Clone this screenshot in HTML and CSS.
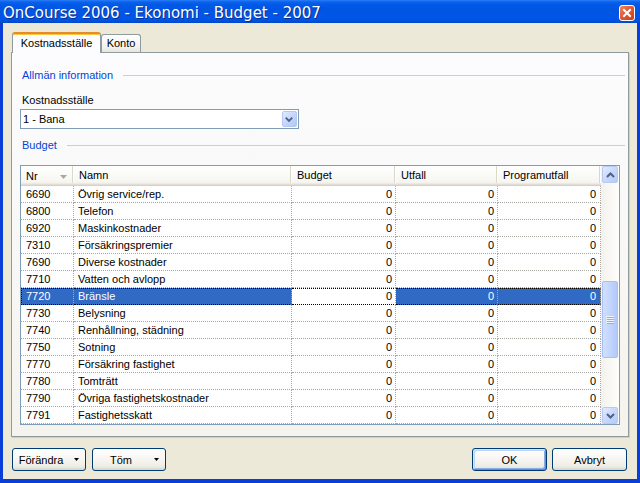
FILE: index.html
```html
<!DOCTYPE html>
<html>
<head>
<meta charset="utf-8">
<title>OnCourse 2006 - Ekonomi - Budget - 2007</title>
<link rel="stylesheet" href="styles.css">
</head>
<body>
<div class="window">
  <div class="titlebar">
    <span class="title">OnCourse 2006 - Ekonomi - Budget - 2007</span>
    <span class="close">
      <svg width="16" height="16" viewBox="0 0 16 16">
        <defs>
          <linearGradient id="cg" x1="0" y1="0" x2="1" y2="1">
            <stop offset="0" stop-color="#F08A66"/>
            <stop offset="0.5" stop-color="#E1552F"/>
            <stop offset="1" stop-color="#C83E1B"/>
          </linearGradient>
        </defs>
        <rect x="0.5" y="0.5" width="15" height="15" rx="2.5" fill="url(#cg)" stroke="#FFFFFF"/>
        <path d="M5 5L11 11M11 5L5 11" stroke="#FFFFFF" stroke-width="2" stroke-linecap="square"/>
      </svg>
    </span>
  </div>
  <div class="client">
    <div class="tabs">
      <div class="tab active">Kostnadsställe</div>
      <div class="tab konto">Konto</div>
    </div>
    <div class="panel">
      <div class="section"><span>Allmän information</span></div>
      <div class="label">Kostnadsställe</div>
      <div class="combo">
        <span>1 - Bana</span>
        <span class="combo-btn">
          <svg width="15" height="16" viewBox="0 0 15 16"><path d="M4 6.5L7.5 10L11 6.5" fill="none" stroke="#4D6185" stroke-width="2"/></svg>
        </span>
      </div>
      <div class="section budget"><span>Budget</span></div>
      <div class="grid">
        <div class="gmain">
          <div class="ghead">
            <div class="hcell nr"><span>Nr</span><svg width="7" height="4" viewBox="0 0 7 4"><path d="M0 0H7L3.5 4Z" fill="#ACA899"/></svg></div>
            <div class="hcell">Namn</div>
            <div class="hcell">Budget</div>
            <div class="hcell">Utfall</div>
            <div class="hcell">Programutfall</div>
          </div>
          <div class="grow"><div class="cell">6690</div><div class="cell">Övrig service/rep.</div><div class="cell num">0</div><div class="cell num">0</div><div class="cell num last">0</div></div>
          <div class="grow"><div class="cell">6800</div><div class="cell">Telefon</div><div class="cell num">0</div><div class="cell num">0</div><div class="cell num last">0</div></div>
          <div class="grow"><div class="cell">6920</div><div class="cell">Maskinkostnader</div><div class="cell num">0</div><div class="cell num">0</div><div class="cell num last">0</div></div>
          <div class="grow"><div class="cell">7310</div><div class="cell">Försäkringspremier</div><div class="cell num">0</div><div class="cell num">0</div><div class="cell num last">0</div></div>
          <div class="grow"><div class="cell">7690</div><div class="cell">Diverse kostnader</div><div class="cell num">0</div><div class="cell num">0</div><div class="cell num last">0</div></div>
          <div class="grow"><div class="cell">7710</div><div class="cell">Vatten och avlopp</div><div class="cell num">0</div><div class="cell num">0</div><div class="cell num last">0</div></div>
          <div class="grow sel"><div class="cell">7720</div><div class="cell">Bränsle</div><div class="cell num focus">0</div><div class="cell num">0</div><div class="cell num last">0</div></div>
          <div class="grow"><div class="cell">7730</div><div class="cell">Belysning</div><div class="cell num">0</div><div class="cell num">0</div><div class="cell num last">0</div></div>
          <div class="grow"><div class="cell">7740</div><div class="cell">Renhållning, städning</div><div class="cell num">0</div><div class="cell num">0</div><div class="cell num last">0</div></div>
          <div class="grow"><div class="cell">7750</div><div class="cell">Sotning</div><div class="cell num">0</div><div class="cell num">0</div><div class="cell num last">0</div></div>
          <div class="grow"><div class="cell">7770</div><div class="cell">Försäkring fastighet</div><div class="cell num">0</div><div class="cell num">0</div><div class="cell num last">0</div></div>
          <div class="grow"><div class="cell">7780</div><div class="cell">Tomträtt</div><div class="cell num">0</div><div class="cell num">0</div><div class="cell num last">0</div></div>
          <div class="grow"><div class="cell">7790</div><div class="cell">Övriga fastighetskostnader</div><div class="cell num">0</div><div class="cell num">0</div><div class="cell num last">0</div></div>
          <div class="grow"><div class="cell">7791</div><div class="cell">Fastighetsskatt</div><div class="cell num">0</div><div class="cell num">0</div><div class="cell num last">0</div></div>
        </div>
        <div class="vscroll">
          <div class="sbtn">
            <svg width="9" height="6" viewBox="0 0 9 6"><path d="M1 5L4.5 1.5L8 5" fill="none" stroke="#4D6185" stroke-width="2"/></svg>
          </div>
          <div class="strack">
            <div class="thumb">
              <svg width="8" height="8" viewBox="0 0 8 8">
                <path d="M0 0.5H8M0 2.5H8M0 4.5H8M0 6.5H8" stroke="#EEF4FE" stroke-width="1"/>
                <path d="M1 1.5H8M1 3.5H8M1 5.5H8M1 7.5H8" stroke="#8CB0F8" stroke-width="1"/>
              </svg>
            </div>
          </div>
          <div class="sbtn">
            <svg width="9" height="6" viewBox="0 0 9 6"><path d="M1 1L4.5 4.5L8 1" fill="none" stroke="#4D6185" stroke-width="2"/></svg>
          </div>
        </div>
      </div>
    </div>
    <div class="buttons">
      <div class="btn dd"><span class="lbl">Förändra</span><svg width="5" height="3" viewBox="0 0 5 3"><path d="M0 0H5L2.5 3Z" fill="#000"/></svg></div>
      <div class="btn dd second"><span class="lbl">Töm</span><svg width="5" height="3" viewBox="0 0 5 3"><path d="M0 0H5L2.5 3Z" fill="#000"/></svg></div>
      <div class="btn wide default push">OK</div>
      <div class="btn wide cancel">Avbryt</div>
    </div>
  </div>
</div>
</body>
</html>
```

FILE: styles.css
```css
* { box-sizing: border-box; }
html, body { margin: 0; padding: 0; }
body {
  width: 640px;
  height: 483px;
  overflow: hidden;
  background: #0A3ED8;
  font-family: "Liberation Sans", Arial, sans-serif;
  font-size: 11px;
  color: #000;
}
.window {
  height: 483px;
  display: flex;
  flex-direction: column;
}
.titlebar {
  height: 23px;
  flex: none;
  display: flex;
  overflow: hidden;
  background: linear-gradient(to bottom, #2C7DF6 0, #0A62EC 2px, #0058E6 5px, #0055E3 12px, #0056EA 18px, #0051DB 21px, #0047C6 23px);
}
.title {
  font-family: "DejaVu Sans", sans-serif;
  font-size: 15px;
  line-height: 23px;
  margin-top: 2px;
  padding-left: 3px;
  color: #fff;
  text-shadow: 1px 1px 0 #0B2C8F;
  white-space: nowrap;
}
.close {
  margin: 5px 5px 0 auto;
  width: 16px;
  height: 16px;
}
.close svg { display: block; }
.client {
  flex: 1;
  margin: 0 3px 4px 3px;
  background: #ECE9D8;
  padding: 9px 8px 0 8px;
  display: flex;
  flex-direction: column;
}
.tabs {
  height: 20px;
  flex: none;
  display: flex;
  align-items: flex-end;
  padding-left: 1px;
  position: relative;
  z-index: 1;
}
.tab {
  height: 18px;
  border: 1px solid #919B9C;
  border-bottom: none;
  border-radius: 3px 3px 0 0;
  background: linear-gradient(#FFFFFF, #F3F2EE 70%, #E6E5DE);
  line-height: 17px;
  text-align: center;
}
.tab.active {
  width: 89px;
  height: 21px;
  margin-bottom: -1px;
  background: #FCFCFE;
  border-top: 2px solid #E68B2C;
  box-shadow: inset 0 1px 0 #FFC73C;
  line-height: 19px;
}
.tab.konto { width: 40px; }
.panel {
  height: 385px;
  flex: none;
  border: 1px solid #919B9C;
  box-shadow: 1px 1px 0 #D2CFC1;
  background: linear-gradient(#FCFCFE, #F4F3EE);
  padding: 15px 8px 0 8px;
  display: flex;
  flex-direction: column;
}
.section {
  display: flex;
  align-items: center;
  height: 14px;
  line-height: 14px;
  margin: 0 -5px 0 2px;
  color: #0046D5;
  flex: none;
}
.section::after {
  content: "";
  flex: 1;
  height: 1px;
  margin-left: 10px;
  background: #D0D0BF;
}
.section.budget { margin-top: 9px; }
.label {
  margin-top: 11px;
  line-height: 14px;
  height: 14px;
  padding-left: 2px;
}
.combo {
  margin-top: 2px;
  width: 279px;
  height: 20px;
  border: 1px solid #7F9DB9;
  background: #fff;
  display: flex;
  align-items: center;
  padding: 0 1px 0 2px;
  flex: none;
}
.combo-btn {
  margin-left: auto;
  width: 15px;
  height: 16px;
  border: 1px solid #B5C8F3;
  border-radius: 2px;
  background: linear-gradient(135deg, #E1EAFE, #C1D3FB 60%, #B4C8F6);
  display: flex;
}
.combo-btn svg { display: block; margin: -1px 0 0 -1px; }
.grid {
  margin-top: 13px;
  width: 600px;
  height: 260px;
  border: 1px solid #7F9DB9;
  background: #fff;
  display: flex;
  flex: none;
  overflow: hidden;
}
.gmain {
  width: 580px;
  flex: none;
}
.ghead, .grow {
  display: grid;
  grid-template-columns: 53px 218px 104px 102px 103px;
}
.ghead { height: 20px; }
.hcell {
  padding: 2px 0 0 5px;
  line-height: 15px;
  background: linear-gradient(#FFFFFF, #F8F7F3 70%, #F1EFE8);
  box-shadow: inset 0 -1px 0 #D6D2C2, inset 0 -2px 0 #E2DED5, inset 0 -3px 0 #EBEAE4, inset -1px 0 0 #FFFFFF, inset -2px 0 0 #D9D6CA;
  white-space: nowrap;
}
.hcell.nr {
  display: flex;
  align-items: center;
  justify-content: space-between;
  padding: 0 7px 0 5px;
}
.hcell.nr svg { margin-top: 1px; }
.grow { height: 17px; }
.cell {
  border-right: 1px dotted #A9A8A3;
  border-bottom: 1px dotted #A9A8A3;
  line-height: 16px;
  padding: 0 3px 0 5px;
  white-space: nowrap;
  overflow: hidden;
}
.cell:nth-child(2) { padding-left: 4px; }
.num { text-align: right; padding-right: 3px; }
.num.last { padding-right: 4px; }
.grow.sel .cell {
  background: #316AC5;
  color: #fff;
  border-top: 1px dotted #000;
  border-bottom: 1px dotted #000;
  line-height: 15px;
}
.grow.sel .cell:first-child { border-left: 1px dotted #000; padding-left: 4px; }
.grow.sel .cell.focus {
  background: #fff;
  color: #000;
}
.vscroll {
  width: 18px;
  flex: none;
  display: flex;
  flex-direction: column;
  padding: 0 1px;
  background: linear-gradient(to right, #F3F1EC, #FEFEFB);
}
.sbtn {
  height: 17px;
  flex: none;
  border: 1px solid #B6CAF5;
  border-radius: 2px;
  background: linear-gradient(135deg, #E3EBFE, #C6D6FC 55%, #B7CBF8);
  display: flex;
  align-items: center;
  justify-content: center;
}
.strack { flex: 1; }
.thumb {
  margin-top: 98px;
  height: 77px;
  border: 1px solid #A9C0F3;
  border-radius: 2px;
  background: linear-gradient(to right, #D2DFFE, #C3D5FD 50%, #B3C9FA);
  display: flex;
  align-items: center;
  justify-content: center;
}
.thumb svg { display: block; }
.buttons {
  margin-top: 11px;
  display: flex;
  padding: 0 2px 0 1px;
  flex: none;
}
.btn {
  width: 74px;
  height: 23px;
  border: 1px solid #003C74;
  border-radius: 3px;
  background: linear-gradient(#FFFFFF, #F5F4F0 55%, #ECEBE5 85%, #D8D3C8);
  display: flex;
  align-items: center;
  justify-content: center;
  line-height: 14px;
}
.btn.dd {
  justify-content: flex-start;
  padding-right: 6px;
}
.btn.dd .lbl {
  flex: 1;
  text-align: center;
  padding-right: 5px;
}
.btn.second { margin-left: 6px; }
.btn.wide { width: 75px; }
.btn.push { margin-left: auto; }
.btn.cancel { margin-left: 5px; }
.btn.default {
  box-shadow: inset 1px 1px 0 #CEE7FF, inset -1px -1px 0 #6982EE, inset 2px 2px 0 #BCD4F6, inset -2px -2px 0 #89ADE4;
}
```
